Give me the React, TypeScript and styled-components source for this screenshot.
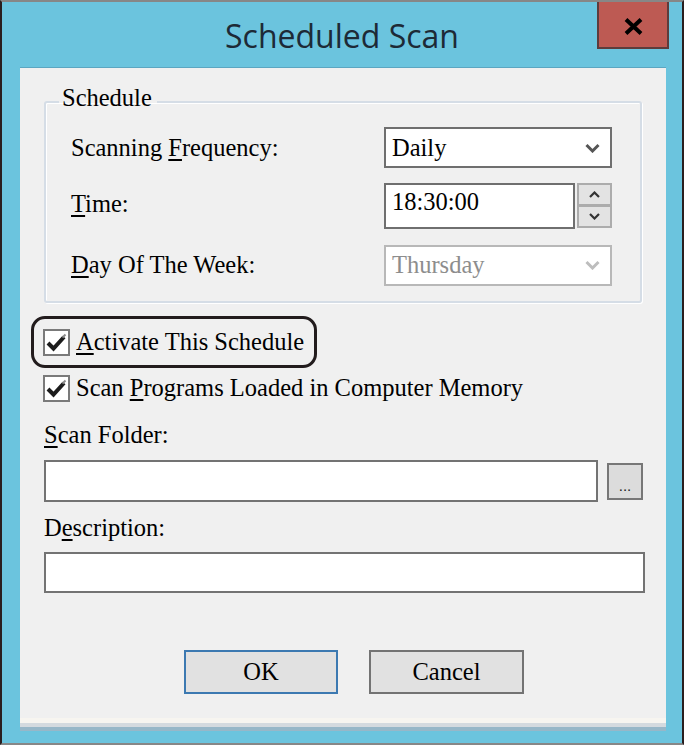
import React from "react";
import styled, { createGlobalStyle } from "styled-components";

const serif = `"Liberation Serif", "Times New Roman", serif`;

const Global = createGlobalStyle`
  html, body { margin: 0; padding: 0; background: #ffffff; }
  * { box-sizing: border-box; }
`;

const Window = styled.div`
  width: 684px;
  height: 745px;
  background: #6bc4de;
  border-top: 2px solid #878787;
  border-bottom: 2px solid #878787;
  border-left: 2px solid #2a1e1e;
  border-right: 2px solid #2a1e1e;
  display: flex;
  flex-direction: column;
`;

const TitleBar = styled.div`
  height: 66px;
  flex: none;
  display: grid;
  grid-template-columns: 1fr auto 1fr;
  align-items: start;
`;

const Title = styled.h1`
  grid-column: 2;
  margin: 12px 0 0;
  font-family: "Open Sans", "Noto Sans", sans-serif;
  font-weight: 400;
  font-size: 32px;
  line-height: 44px;
  color: #1d2a36;
  white-space: nowrap;
`;

const CloseButton = styled.button`
  grid-column: 3;
  justify-self: end;
  margin-right: 13px;
  width: 72px;
  height: 47px;
  padding: 3px 0 0;
  background: #bd5a53;
  border: 2px solid #5d3c3c;
  border-top: none;
  display: flex;
  align-items: center;
  justify-content: center;
`;

const Panel = styled.div`
  margin: 0 16px 0 18px;
  height: 650px;
  flex: none;
  background: #f0f0f0;
  box-shadow: 0 -1px 0 #5ba6c1, 0 5px 0 #f7f5f0, 0 9px 0 #d4dadf,
    0 13px 0 #97b7c8;
  display: flex;
  flex-direction: column;
  align-items: stretch;
  padding: 16px 21px 0 24px;
  font-family: ${serif};
  font-size: 24.5px;
  line-height: 28px;
  color: #000;
`;

const Group = styled.fieldset`
  margin: 0 3px 0 0;
  padding: 7px 28px 15px 13px;
  border: 2px solid #d5dde6;
  border-radius: 3px;
  box-shadow: 1px 1px 0 #ffffff, inset 1px 1px 0 #ffffff;
`;

const Legend = styled.legend`
  padding: 0 5px 8px 3px;
  font-size: 24.5px;
  line-height: 28px;
`;

const FormGrid = styled.div`
  display: grid;
  grid-template-columns: 1fr 228px;
  grid-template-rows: 41px 46px 42px;
  row-gap: 15px;
  align-items: center;
  padding-left: 12px;
`;

const RowLabel = styled.span<{ $raise?: boolean }>`
  white-space: nowrap;
  padding-bottom: ${(p) => (p.$raise ? "5px" : "0")};
`;

const Key = styled.span`
  text-decoration: underline;
  text-decoration-thickness: 2px;
  text-underline-offset: 3px;
`;

const Select = styled.div<{ $disabled?: boolean }>`
  height: 41px;
  display: flex;
  align-items: center;
  justify-content: space-between;
  padding: 0 10px 0 6px;
  background: #ffffff;
  border: 2px solid ${(p) => (p.$disabled ? "#b8b8b8" : "#6f6f6f")};
  color: ${(p) => (p.$disabled ? "#8d8d8d" : "#000")};
`;

const TimeRow = styled.div`
  display: flex;
  gap: 2px;
  height: 46px;
`;

const TimeInput = styled.input`
  width: 191px;
  height: 46px;
  border: 2px solid #6f6f6f;
  background: #fff;
  padding: 0 0 8px 6px;
  font-family: ${serif};
  font-size: 24.5px;
  color: #000;
  outline: none;
`;

const Spinner = styled.div`
  width: 35px;
  height: 45px;
  display: flex;
  flex-direction: column;
  border: 2px solid #acacac;
  background: #e3e3e3;
`;

const SpinHalf = styled.div<{ $top?: boolean }>`
  flex: 1;
  display: flex;
  align-items: center;
  justify-content: center;
  border-bottom: ${(p) => (p.$top ? "3px solid #acacac" : "none")};
`;

const CheckRow = styled.label`
  display: flex;
  align-items: center;
  gap: 6px;
  white-space: nowrap;
`;

const Highlight = styled(CheckRow)`
  width: fit-content;
  margin: 13px 0 0 -13px;
  padding: 9px 10px 9px 9px;
  border: 3px solid #221c1d;
  border-radius: 14px;
`;

const PlainCheck = styled(CheckRow)`
  margin-top: 6px;
  margin-left: -1px;
`;

const Box = styled.span`
  width: 27px;
  height: 27px;
  flex: none;
  border: 2px solid #7a7a7a;
  background: #fff;
  display: flex;
  align-items: center;
  justify-content: center;
`;

const FieldLabel = styled.div<{ $mt: number }>`
  margin-top: ${(p) => p.$mt}px;
  white-space: nowrap;
`;

const FolderRow = styled.div`
  margin-top: 11px;
  display: flex;
  align-items: center;
  gap: 9px;
  margin-right: 2px;
`;

const TextInput = styled.input<{ $h: number; $mt?: number }>`
  display: block;
  width: 100%;
  height: ${(p) => p.$h}px;
  flex: none;
  margin-top: ${(p) => p.$mt ?? 0}px;
  border: 2px solid #737373;
  background: #fff;
  outline: none;
  font-family: ${serif};
  font-size: 24.5px;
`;

const FolderInput = styled(TextInput)`
  flex: 1;
  width: auto;
  min-width: 0;
`;

const BrowseButton = styled.button`
  width: 36px;
  height: 37px;
  flex: none;
  padding: 0 0 6px;
  border: 2px solid #777;
  background: #dcdcdc;
  display: flex;
  align-items: flex-end;
  justify-content: center;
  font-family: "Liberation Sans", sans-serif;
  font-size: 15px;
  line-height: 12px;
  color: #222;
`;

const ButtonRow = styled.div`
  margin-top: 57px;
  padding-left: 140px;
  display: flex;
  gap: 31px;
`;

const DialogButton = styled.button<{ $primary?: boolean; $w: number }>`
  width: ${(p) => p.$w}px;
  height: 44px;
  background: #e1e1e1;
  border: 2px solid ${(p) => (p.$primary ? "#3c79b1" : "#737373")};
  font-family: ${serif};
  font-size: 24.5px;
  line-height: 28px;
  color: #000;
  padding: 0;
`;

const Chevron = ({ color }: { color: string }) => (
  <svg width="15" height="10" viewBox="0 0 15 10">
    <path d="M1.5 2 L7.5 8 L13.5 2" fill="none" stroke={color} strokeWidth="3" />
  </svg>
);

const SmallArrow = ({ up }: { up?: boolean }) => (
  <svg width="11" height="7" viewBox="0 0 11 7">
    <path
      d={up ? "M1 6 L5.5 1.5 L10 6" : "M1 1 L5.5 5.5 L10 1"}
      fill="none"
      stroke="#333"
      strokeWidth="2.2"
    />
  </svg>
);

const Check = () => (
  <svg width="21" height="19" viewBox="0 0 21 19">
    <path d="M2 10 L7.5 15.5 L18 4" fill="none" stroke="#1c1c1c" strokeWidth="4" />
    <path d="M16.5 4.5 L19.5 1.5" fill="none" stroke="#8a8a8a" strokeWidth="2" />
  </svg>
);

const CloseGlyph = () => (
  <svg width="19" height="17" viewBox="0 0 19 17">
    <path d="M2 1.5 L17 15.5 M17 1.5 L2 15.5" stroke="#000" strokeWidth="4" />
  </svg>
);

export default function App() {
  return (
    <>
      <Global />
      <Window>
        <TitleBar>
          <Title>Scheduled Scan</Title>
          <CloseButton aria-label="Close">
            <CloseGlyph />
          </CloseButton>
        </TitleBar>
        <Panel>
          <Group>
            <Legend>Schedule</Legend>
            <FormGrid>
              <RowLabel>
                Scanning <Key>F</Key>requency:
              </RowLabel>
              <Select>
                <span>Daily</span>
                <Chevron color="#555" />
              </Select>
              <RowLabel $raise>
                <Key>T</Key>ime:
              </RowLabel>
              <TimeRow>
                <TimeInput value="18:30:00" readOnly />
                <Spinner>
                  <SpinHalf $top>
                    <SmallArrow up />
                  </SpinHalf>
                  <SpinHalf>
                    <SmallArrow />
                  </SpinHalf>
                </Spinner>
              </TimeRow>
              <RowLabel>
                <Key>D</Key>ay Of The Week:
              </RowLabel>
              <Select $disabled>
                <span>Thursday</span>
                <Chevron color="#bdbdbd" />
              </Select>
            </FormGrid>
          </Group>

          <Highlight>
            <Box>
              <Check />
            </Box>
            <span>
              <Key>A</Key>ctivate This Schedule
            </span>
          </Highlight>
          <PlainCheck>
            <Box>
              <Check />
            </Box>
            <span>
              Scan <Key>P</Key>rograms Loaded in Computer Memory
            </span>
          </PlainCheck>

          <FieldLabel $mt={19}>
            <Key>S</Key>can Folder:
          </FieldLabel>
          <FolderRow>
            <FolderInput $h={42} readOnly />
            <BrowseButton>...</BrowseButton>
          </FolderRow>
          <FieldLabel $mt={12}>
            D<Key>e</Key>scription:
          </FieldLabel>
          <TextInput $h={41} $mt={10} readOnly />

          <ButtonRow>
            <DialogButton $primary $w={154}>
              OK
            </DialogButton>
            <DialogButton $w={155}>Cancel</DialogButton>
          </ButtonRow>
        </Panel>
      </Window>
    </>
  );
}
